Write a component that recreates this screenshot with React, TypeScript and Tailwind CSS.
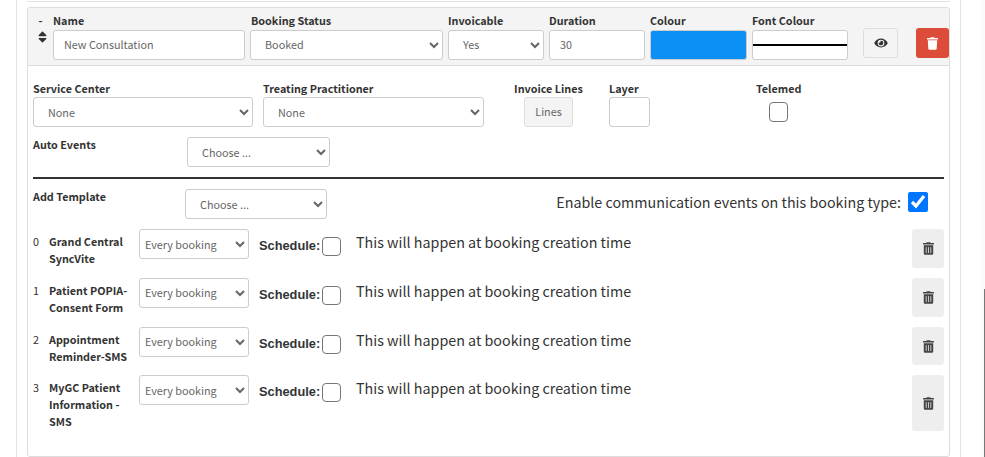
import React from "react";

function Label({ children, className = "" }: { children: React.ReactNode; className?: string }) {
  return <div className={"text-[10.8px] leading-[17px] font-bold text-[#333] whitespace-nowrap " + className}>{children}</div>;
}

function Sel({ value, className = "" }: { value: string; className?: string }) {
  return (
    <select
      defaultValue={value}
      className={"h-[30px] bg-white border border-[#ccc] rounded-[3px] text-[10.8px] text-[#666] outline-none " + className}
    >
      <option>{value}</option>
    </select>
  );
}

function Field({ value, className = "" }: { value?: string; className?: string }) {
  return (
    <input
      defaultValue={value}
      className={"block h-[30px] bg-white border border-[#ccc] rounded-[3px] text-[10.8px] text-[#666] outline-none " + className}
    />
  );
}

function Check({ className = "" }: { className?: string }) {
  return <input type="checkbox" className={"appearance-none m-0 w-[19px] h-[19px] bg-white border-[1.5px] border-[#767676] rounded-[4px] " + className} />;
}

function Trash({ className = "" }: { className?: string }) {
  return (
    <svg viewBox="0 0 448 512" className={className} fill="currentColor">
      <path d="M432 32H312l-9.4-18.7A24 24 0 0 0 281.1 0H166.8a23.72 23.72 0 0 0-21.4 13.3L136 32H16A16 16 0 0 0 0 48v32a16 16 0 0 0 16 16h416a16 16 0 0 0 16-16V48a16 16 0 0 0-16-16zM53.2 467a48 48 0 0 0 47.9 45h245.8a48 48 0 0 0 47.9-45L416 128H32z" />
    </svg>
  );
}

function TrashAlt({ className = "" }: { className?: string }) {
  return (
    <svg viewBox="0 0 448 512" className={className} fill="currentColor">
      <path d="M32 464a48 48 0 0 0 48 48h288a48 48 0 0 0 48-48V128H32zm272-256a16 16 0 0 1 32 0v224a16 16 0 0 1-32 0zm-96 0a16 16 0 0 1 32 0v224a16 16 0 0 1-32 0zm-96 0a16 16 0 0 1 32 0v224a16 16 0 0 1-32 0zM432 32H312l-9.4-18.7A24 24 0 0 0 281.1 0H166.8a23.72 23.72 0 0 0-21.4 13.3L136 32H16A16 16 0 0 0 0 48v32a16 16 0 0 0 16 16h416a16 16 0 0 0 16-16V48a16 16 0 0 0-16-16z" />
    </svg>
  );
}

function Row({ i, name, h, selClass = "" }: { i: number; name: string[]; h: string; selClass?: string }) {
  return (
    <div className={"flex items-start " + h}>
      <div className="w-[16px] text-[10.8px] leading-[17px] text-[#333] pt-[4px]">{i}</div>
      <div className="w-[90px] pt-[4px]">
        {name.map((n) => (
          <Label key={n}>{n}</Label>
        ))}
      </div>
      <Sel value="Every booking" className={"w-[110px] pl-[1px] " + selClass} />
      <div className="flex items-center ml-[10px] mt-[7px] w-[82px]">
        <span className="w-[63px] font-['Liberation_Sans'] font-bold text-[12.8px] leading-[20px] text-[#333]">Schedule:</span>
        <Check />
      </div>
      <div className="ml-[15px] mt-[1px] text-[14.3px] leading-[24px] text-[#333] flex-1">This will happen at booking creation time</div>
      <button className="w-[32px] self-stretch bg-[#eee] rounded-[3px] flex items-center justify-center text-[#444]">
        <TrashAlt className="w-[11px] h-[13px]" />
      </button>
    </div>
  );
}

export default function App() {
  return (
    <div className="w-[985px] h-[457px] overflow-hidden bg-white flex justify-between font-['Noto_Sans_CJK_SC','Source_Sans_Pro',sans-serif]">
      <div className="ml-[16px] w-[945px] h-[457px] border-x border-[#e2e2e2] px-[10px]">
        <div className="h-[2px] border-b border-[#e2e2e2]" />
        <div className="mt-[5px] h-[450px] border border-[#ddd] rounded-[3px]">
          <div className="h-[58px] bg-[#f4f4f4] border-b border-[#ddd] flex pl-[4px] rounded-t-[3px]">
            <div className="w-[21px] flex flex-col items-center pt-[4px] text-[#333]">
              <div className="text-[10.8px] leading-[17px] font-bold pr-[4px]">-</div>
              <svg viewBox="0 0 320 512" className="w-[9px] h-[14px] mt-[1px] mr-[1px]" fill="#333">
                <path d="M41 288h238c21.4 0 32.1 25.9 17 41L177 448c-9.4 9.4-24.6 9.4-33.9 0L24 329c-15.1-15.1-4.4-41 17-41zm255-105L177 64c-9.4-9.4-24.6-9.4-33.9 0L24 183c-15.1 15.1-4.4 41 17 41h238c21.4 0 32.1-25.9 17-41z" />
              </svg>
            </div>
            <div className="w-[197px] pt-[4px]">
              <Label>Name</Label>
              <Field value="New Consultation" className="mt-[1px] w-[192px] pl-[10px] pb-[2px]" />
            </div>
            <div className="w-[198px] pt-[4px]">
              <Label className="pl-[1px]">Booking Status</Label>
              <Sel value="Booked" className="mt-[1px] w-[193px] pl-[10px] pb-[2px]" />
            </div>
            <div className="w-[101px] pt-[4px]">
              <Label>Invoicable</Label>
              <Sel value="Yes" className="mt-[1px] w-[96px] pl-[10px] pb-[2px]" />
            </div>
            <div className="w-[101px] pt-[4px]">
              <Label>Duration</Label>
              <Field value="30" className="mt-[1px] w-[96px] pl-[10px] pb-[2px]" />
            </div>
            <div className="w-[102px] pt-[4px]">
              <Label>Colour</Label>
              <div className="mt-[1px] w-[97px] h-[30px] bg-[#0d90f5] border border-[#ccc] rounded-[3px]" />
            </div>
            <div className="w-[111px] pt-[4px]">
              <Label>Font Colour</Label>
              <div className="mt-[1px] w-[96px] h-[30px] bg-white border border-[#ccc] rounded-[3px] flex items-center">
                <div className="w-full h-[2px] bg-black" />
              </div>
            </div>
            <button className="mt-[20px] w-[35px] h-[30px] bg-[#f4f4f4] border border-[#ddd] rounded-[3px] flex items-center justify-center text-[#333]">
              <svg viewBox="0 0 576 512" className="w-[14px] h-[12px]" fill="currentColor">
                <path d="M572.52 241.4C518.29 135.59 410.93 64 288 64S57.68 135.64 3.48 241.41a32.35 32.35 0 0 0 0 29.19C57.71 376.41 165.07 448 288 448s230.32-71.64 284.52-177.41a32.35 32.35 0 0 0 0-29.19zM288 400a144 144 0 1 1 144-144 143.93 143.93 0 0 1-144 144zm0-240a95.31 95.31 0 0 0-25.31 3.79 47.85 47.85 0 0 1-66.9 66.9A95.78 95.78 0 1 0 288 160z" />
              </svg>
            </button>
            <button className="ml-[18px] mt-[20px] w-[33px] h-[30px] bg-[#dd4b39] rounded-[3px] flex items-center justify-center text-white">
              <Trash className="w-[11px] h-[13px]" />
            </button>
          </div>

          <div className="px-[5px]">
            <div className="flex mt-[14px] h-[47px]">
              <div className="w-[230px]">
                <Label>Service Center</Label>
                <Sel value="None" className="w-[220px] pl-[10px]" />
              </div>
              <div className="w-[251px]">
                <Label>Treating Practitioner</Label>
                <Sel value="None" className="w-[221px] pl-[10px]" />
              </div>
              <div className="w-[95px] flex flex-col items-center pr-[26px]">
                <Label>Invoice Lines</Label>
                <button className="w-[49px] h-[30px] bg-[#f4f4f4] border border-[#ddd] rounded-[3px] text-[10.8px] text-[#666] text-center pb-[2px]">Lines</button>
              </div>
              <div className="w-[147px]">
                <Label>Layer</Label>
                <Field className="w-[41px]" />
              </div>
              <div className="flex flex-col items-center">
                <Label>Telemed</Label>
                <Check className="mt-[5px] h-[20px]" />
              </div>
            </div>

            <div className="flex items-start mt-[10px] h-[30px]">
              <Label className="w-[154px] -mt-[1px]">Auto Events</Label>
              <Sel value="Choose ..." className="w-[143px] pl-[10px]" />
            </div>

            <div className="mt-[10px] h-[2px] bg-[#333]" />

            <div className="flex items-start mt-[10px] h-[30px]">
              <Label className="w-[152px] -mt-[1px]">Add Template</Label>
              <Sel value="Choose ..." className="w-[142px] pl-[10px]" />
              <div className="flex-1 flex items-center justify-end pr-[16px] pt-[2px]">
                <span className="text-[14.3px] leading-[22px] text-[#333]">Enable communication events on this booking type:</span>
                <input type="checkbox" defaultChecked className="m-0 ml-[7px] w-[20px] h-[20px]" />
              </div>
            </div>

            <div className="mt-[10px] flex flex-col gap-[10px]">
              <Row i={0} name={["Grand Central", "SyncVite"]} h="h-[39px]" />
              <Row i={1} name={["Patient POPIA-", "Consent Form"]} h="h-[39px]" selClass="pb-[2px]" />
              <Row i={2} name={["Appointment", "Reminder-SMS"]} h="h-[38px]" selClass="pb-[2px]" />
              <Row i={3} name={["MyGC Patient", "Information -", "SMS"]} h="h-[56px]" />
            </div>
          </div>
        </div>
      </div>
      <div className="w-[4px] h-[457px] bg-[#fafafa] flex justify-end">
        <div className="mt-[289px] w-[1px] h-[168px] bg-[#777]" />
      </div>
    </div>
  );
}
